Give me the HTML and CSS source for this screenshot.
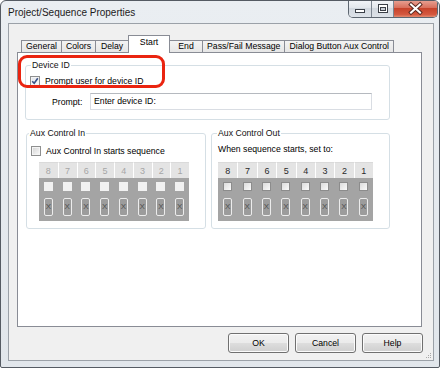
FILE: index.html
```html
<!DOCTYPE html>
<html>
  <head>
    <meta charset="utf-8">
    <link rel="stylesheet" href="styles.css">
  </head>
  <body>
    <div id="window">
      <div id="titlebar">
        <span class="title">Project/Sequence Properties</span>
        <div class="caption-buttons">
          <span class="cap-btn cap-min">
            <svg width="22" height="17" viewBox="0 0 22 17"><rect x="6.5" y="9.5" width="9" height="3" fill="#fff" stroke="#3a3f47"/></svg>
          </span>
          <span class="cap-btn cap-max">
            <svg width="21" height="17" viewBox="0 0 21 17"><rect x="6.5" y="4.5" width="9" height="8" fill="#fff" stroke="#3a3f47"/><rect x="8.5" y="7.5" width="5" height="3" fill="#c9ced6" stroke="#3a3f47"/></svg>
          </span>
          <span class="cap-btn cap-close">
            <svg width="43" height="17" viewBox="0 0 43 17"><path d="M17 4.5 L26 12.5 M26 4.5 L17 12.5" stroke="#5a2a22" stroke-width="4" stroke-linecap="square"/><path d="M17 4.5 L26 12.5 M26 4.5 L17 12.5" stroke="#fff" stroke-width="2" stroke-linecap="square"/></svg>
          </span>
        </div>
      </div>

      <div id="frame">
        <div id="client">
          <!-- tab strip -->
          <div class="tabs">
            <span class="tab">General</span>
            <span class="tab">Colors</span>
            <span class="tab">Delay</span>
            <span class="tab selected">Start</span>
            <span class="tab">End</span>
            <span class="tab">Pass/Fail Message</span>
            <span class="tab">Dialog Button Aux Control</span>
          </div>

          <div class="tab-panel">
            <fieldset class="group group-device">
              <legend>Device ID</legend>
              <div class="check-row">
                <span class="checkbox checked">
                  <svg width="8" height="8" viewBox="0 0 8 8"><path d="M1.2 4.2 L3.2 6.3 L6.8 1.2" fill="none" stroke="#3b5286" stroke-width="1.6"/></svg>
                </span>
                Prompt user for device ID
              </div>
              <div class="prompt-row">
                <span class="prompt-label">Prompt:</span>
                <span class="textbox">Enter device ID:</span>
              </div>
            </fieldset>

            <div class="aux-row">
              <fieldset class="group group-aux-in">
                <legend>Aux Control In</legend>
                <div class="check-row">
                  <span class="checkbox"></span>
                  Aux Control In starts sequence
                </div>
                <div class="bits bits-in">
                  <span class="bit-num">8</span><span class="bit-num">7</span><span class="bit-num">6</span><span class="bit-num">5</span>
                  <span class="bit-num">4</span><span class="bit-num">3</span><span class="bit-num">2</span><span class="bit-num">1</span>
                  <span class="bit-check"><span class="mini-box"></span></span><span class="bit-check"><span class="mini-box"></span></span>
                  <span class="bit-check"><span class="mini-box"></span></span><span class="bit-check"><span class="mini-box"></span></span>
                  <span class="bit-check"><span class="mini-box"></span></span><span class="bit-check"><span class="mini-box"></span></span>
                  <span class="bit-check"><span class="mini-box"></span></span><span class="bit-check"><span class="mini-box"></span></span>
                  <span class="bit-x"><span class="xbtn">X</span></span><span class="bit-x"><span class="xbtn">X</span></span>
                  <span class="bit-x"><span class="xbtn">X</span></span><span class="bit-x"><span class="xbtn">X</span></span>
                  <span class="bit-x"><span class="xbtn">X</span></span><span class="bit-x"><span class="xbtn">X</span></span>
                  <span class="bit-x"><span class="xbtn">X</span></span><span class="bit-x"><span class="xbtn">X</span></span>
                </div>
              </fieldset>

              <fieldset class="group group-aux-out">
                <legend>Aux Control Out</legend>
                <div class="text-row">When sequence starts, set to:</div>
                <div class="bits bits-out">
                  <span class="bit-num">8</span><span class="bit-num">7</span><span class="bit-num">6</span><span class="bit-num">5</span>
                  <span class="bit-num">4</span><span class="bit-num">3</span><span class="bit-num">2</span><span class="bit-num">1</span>
                  <span class="bit-check"><span class="mini-box"></span></span><span class="bit-check"><span class="mini-box"></span></span>
                  <span class="bit-check"><span class="mini-box"></span></span><span class="bit-check"><span class="mini-box"></span></span>
                  <span class="bit-check"><span class="mini-box"></span></span><span class="bit-check"><span class="mini-box"></span></span>
                  <span class="bit-check"><span class="mini-box"></span></span><span class="bit-check"><span class="mini-box"></span></span>
                  <span class="bit-x"><span class="xbtn">X</span></span><span class="bit-x"><span class="xbtn">X</span></span>
                  <span class="bit-x"><span class="xbtn">X</span></span><span class="bit-x"><span class="xbtn">X</span></span>
                  <span class="bit-x"><span class="xbtn">X</span></span><span class="bit-x"><span class="xbtn">X</span></span>
                  <span class="bit-x"><span class="xbtn">X</span></span><span class="bit-x"><span class="xbtn">X</span></span>
                </div>
              </fieldset>
            </div>
          </div>

          <div class="button-row">
            <span class="button">OK</span>
            <span class="button">Cancel</span>
            <span class="button">Help</span>
          </div>

          <svg class="grip" width="7" height="7" viewBox="0 0 7 7">
            <rect x="5" y="1" width="1" height="1" fill="#a8a8a8"/>
            <rect x="3" y="3" width="1" height="1" fill="#a8a8a8"/><rect x="5" y="3" width="1" height="1" fill="#a8a8a8"/>
            <rect x="1" y="5" width="1" height="1" fill="#a8a8a8"/><rect x="3" y="5" width="1" height="1" fill="#a8a8a8"/><rect x="5" y="5" width="1" height="1" fill="#a8a8a8"/>
          </svg>
        </div>
      </div>

      <!-- red highlight drawn over the screenshot -->
      <div class="highlight"></div>
    </div>
  </body>
</html>
```

FILE: styles.css
```css
/* Page */
body {
  margin: 0;
  background: #fff;
  font-family: "Liberation Sans", Arial, sans-serif;
  font-size: 8.7px;
  color: #000;
}

/* Outer Aero window */
#window {
  position: relative;
  width: 440px;
  height: 368px;
  box-sizing: border-box;
  border: 1px solid #555b63;
  border-radius: 6px 6px 2px 2px;
  background: linear-gradient(#eaeef2, #e1e6eb);
  display: flex;
  flex-direction: column;
  overflow: hidden;
}

#titlebar {
  height: 22px;
  flex-shrink: 0;
  display: flex;
  align-items: flex-start;
}

  .title {
    padding: 6px 0 0 7px;
    font-size: 10px;
    line-height: 12px;
    color: #1b1b1b;
  }

  .caption-buttons {
    display: flex;
    margin-left: auto;
    margin-right: 1px;
    margin-top: -1px;
    border: 1px solid #5d6670;
    border-top: none;
    border-radius: 0 0 5px 5px;
    overflow: hidden;
  }

  .cap-btn {
    display: flex;
    height: 17px;
  }

  .cap-min,
  .cap-max {
    background: linear-gradient(#f3f5f8, #e3e7ec 45%, #d2d8df 50%, #dde2e8);
    border-right: 1px solid #7c8590;
  }

  .cap-close {
    background: linear-gradient(#e9a597, #d9705d 45%, #c7432b 50%, #d4583f 85%, #e48a6f);
  }

/* Window frame around client area */
#frame {
  flex: 1;
  display: flex;
  padding: 0 5px 6px 7px;
}

#client {
  flex: 1;
  position: relative;
  display: flex;
  flex-direction: column;
  background: #f0f0f0;
  border: 1px solid #9ba1a8;
  padding: 11px 11px 0 8px;
}

/* Tab strip */
.tabs {
  display: flex;
  align-items: flex-end;
  height: 17px;
  padding-left: 4px;
  position: relative;
  z-index: 1;
}

  .tab {
    height: 11px;
    line-height: 10px;
    min-width: 24px;
    padding: 0 4px;
    text-align: center;
    border: 1px solid #898c95;
    border-bottom: none;
    margin-right: -1px;
    background: linear-gradient(#f3f3f3, #e6e6e6);
    white-space: nowrap;
  }

  .tab.selected {
    height: 16px;
    padding: 1px 8px 0;
    margin-bottom: -1px;
    background: #fff;
    position: relative;
    z-index: 2;
  }

.tab-panel {
  width: 405px;
  height: 275px;
  box-sizing: border-box;
  border: 1px solid #898c95;
  background: #fff;
  padding: 6px 0 0 7px;
}

/* Group boxes */
.group {
  margin: 0;
  padding: 0 4px 7px 4px;
  border: 1px solid #d5dfe5;
  border-radius: 3px;
  box-sizing: border-box;
  min-width: 0;
}

  .group legend {
    padding: 0 1px;
    margin-left: 1px;
    line-height: 12px;
    color: #111;
  }

.group-device {
  width: 365px;
  padding-bottom: 9px;
}

.group-aux-in {
  width: 180px;
}

  .group-aux-in legend {
    margin-left: -2px;
  }

.group-aux-out {
  width: 179px;
}

.aux-row {
  display: flex;
  gap: 5px;
  margin: 7px 0 0 1px;
}

.check-row {
  display: flex;
  align-items: center;
  height: 13px;
  margin-top: 3px;
  white-space: nowrap;
}

.group-aux-in .check-row {
  margin-top: 5px;
}

.text-row {
  height: 13px;
  line-height: 11px;
  margin: 5px 0 0 2px;
  white-space: nowrap;
}

/* Win7 style check box */
.checkbox {
  display: inline-flex;
  align-items: center;
  justify-content: center;
  width: 8px;
  height: 8px;
  margin-right: 5px;
  border: 1px solid #8e8f8f;
  box-shadow: inset 0 0 0 1px #f4f4f4;
  background: linear-gradient(135deg, #d2d2d2, #fbfbfb);
}

  .checkbox.checked {
    background: linear-gradient(135deg, #dfe3ea, #fbfbfb);
  }

.prompt-row {
  display: flex;
  align-items: center;
  margin-top: 6px;
  padding-left: 22px;
}

  .prompt-label {
    width: 38px;
  }

  .textbox {
    width: 282px;
    height: 17px;
    box-sizing: border-box;
    border: 1px solid #d9dde3;
    border-top-color: #b5b9bf;
    padding-left: 3px;
    line-height: 15px;
  }

/* Bit grids (8..1) */
.bits {
  display: grid;
  grid-template-columns: repeat(8, 1fr);
  margin-top: 5px;
}

.bits-in {
  width: 150px;
  margin-left: 8px;
}

.bits-out {
  width: 155px;
  margin-left: 2px;
}

  .bit-num {
    height: 16px;
    line-height: 16px;
    text-align: center;
    font-size: 9px;
    background: #e4e4e4;
    border-left: 1px solid #fff;
    border-top: 1px solid #dadada;
    box-sizing: border-box;
  }

  .bit-num:first-child {
    border-left: none;
  }

  .bits-in .bit-num {
    color: #a6a6a6;
  }

  .bits-out .bit-num {
    color: #2a2a2a;
  }

  .bit-check {
    height: 16px;
    display: flex;
    justify-content: center;
    align-items: flex-start;
    padding-top: 4px;
    box-sizing: border-box;
    background: #a4a4a4;
  }

  .mini-box {
    width: 9px;
    height: 9px;
    box-sizing: border-box;
    background: #f1f1f1;
  }

  .bits-out .mini-box {
    border: 1px solid #8c8c8c;
    background: linear-gradient(135deg, #dcdcdc, #fafafa);
  }

  .bit-x {
    height: 27px;
    display: flex;
    justify-content: center;
    align-items: flex-start;
    padding-top: 4px;
    box-sizing: border-box;
    background: #a4a4a4;
  }

  .xbtn {
    width: 9px;
    height: 18px;
    box-sizing: border-box;
    border: 1.5px solid #ececec;
    border-radius: 2px;
    background: #9c9c9c;
    color: #4e4e4e;
    font-size: 8px;
    line-height: 15px;
    text-align: center;
  }

/* Dialog buttons */
.button-row {
  display: flex;
  justify-content: flex-end;
  gap: 6px;
  margin: 6px -1px 0 0;
}

  .button {
    width: 61px;
    height: 20px;
    box-sizing: border-box;
    border: 1px solid #707070;
    border-radius: 3px;
    box-shadow: inset 0 0 0 1px #fbfbfb;
    background: linear-gradient(#f2f2f2, #ebebeb 48%, #dddddd 52%, #cfcfcf);
    text-align: center;
    line-height: 18px;
  }

.grip {
  position: absolute;
  right: 1px;
  bottom: 1px;
}

/* Red annotation ring */
.highlight {
  position: absolute;
  left: 17px;
  top: 54px;
  width: 147px;
  height: 33px;
  box-sizing: border-box;
  border: 3px solid #ea2410;
  border-radius: 9px;
}
```
